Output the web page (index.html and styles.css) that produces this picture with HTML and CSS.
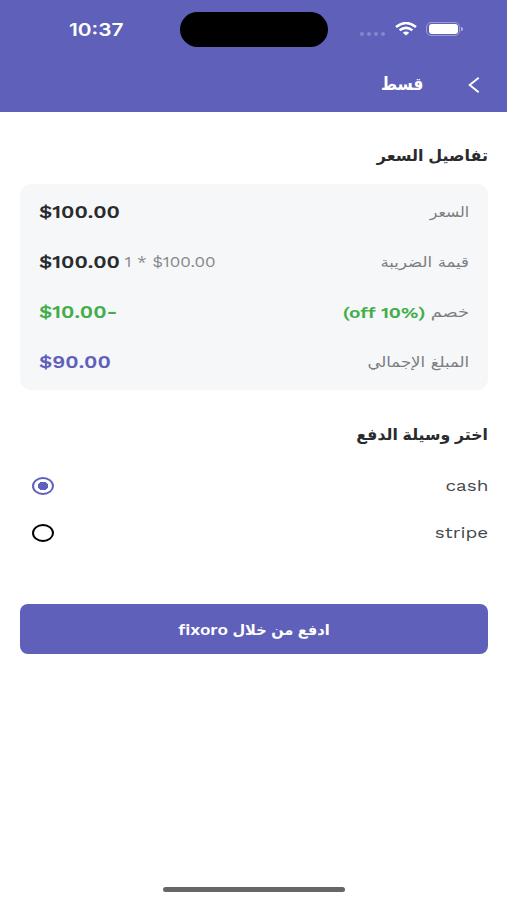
FILE: index.html
```html
<!DOCTYPE html>
<html lang="ar" dir="rtl">
<head>
<meta charset="utf-8">
<title>قسط</title>
<link rel="stylesheet" href="styles.css">
</head>
<body>
<header class="top">
  <div class="status" dir="ltr">
    <span class="clock"><b>10:37</b></span>
    <span class="island"></span>
    <span class="signals">
      <i class="dots"><i></i><i></i><i></i><i></i></i>
      <svg class="wifi" viewBox="0 0 22 14"><path d="M1 5Q11-3 21 5M4.600 8.300Q11 3.400 17.400 8.300" fill="none" stroke="#fff" stroke-width="2.500"/><path d="M7.800 10.700Q11 8.200 14.200 10.700L11 13.600Z" fill="#fff"/></svg>
      <span class="battery"></span>
    </span>
  </div>
  <div class="bar">
    <svg class="back" viewBox="0 0 12 16"><path d="M10.700 .8 1.700 8l9 7.200" fill="none" stroke="#fff" stroke-width="1.900"/></svg>
    <h1>قسط</h1>
  </div>
</header>
<main>
  <h2>تفاصيل السعر</h2>
  <section class="card">
    <div class="row"><span class="label short">السعر</span><b class="amount" dir="ltr">$100.00</b></div>
    <div class="row"><span class="label">قيمة الضريبة</span><span class="sum" dir="ltr"><b class="amount">$100.00</b><span class="calc">1 * $100.00</span></span></div>
    <div class="row"><span class="label discount"><span class="word">خصم</span><b class="off" dir="ltr">(off 10%)</b></span><b class="amount green" dir="ltr">$10.00-</b></div>
    <div class="row"><span class="label">المبلغ الإجمالي</span><b class="amount blue" dir="ltr">$90.00</b></div>
  </section>
  <h2 class="pay">اختر وسيلة الدفع</h2>
  <div class="options">
    <div class="option"><span>cash</span><i class="radio on"></i></div>
    <div class="option"><span>stripe</span><i class="radio"></i></div>
  </div>
  <button><span class="action">ادفع من خلال <b>fixoro</b></span></button>
</main>
<div class="home"></div>
</body>
</html>
```
FILE: styles.css
```css
*{box-sizing:border-box}
body{margin:0;height:900px;background:#fff;color:#292b2e;font-family:"Work Sans","DejaVu Sans",sans-serif;display:flex;flex-direction:column;overflow:hidden}
.top{height:112px;background:#5f60b9;color:#fff}
.status{height:59px;display:flex;padding:12px 44px 0 69px}
.clock{width:111px;font-family:Inter,sans-serif;font-size:17.5px;line-height:35px}
.clock b{display:inline-block;font-weight:600;transform:scaleX(1.19);transform-origin:left}
.island{width:148px;height:35px;border-radius:18px;background:#000}
.signals{display:flex;align-items:center;height:34px;margin-left:32px}
.dots{display:flex;gap:3px;margin-top:9px}
.dots i{width:4px;height:4px;border-radius:50%;background:#8586cb}
.wifi{width:22px;height:14px;margin:0 0 1px 10px}
.battery{width:34px;height:14px;border:1px solid #9c9dd5;border-radius:5px;padding:1px;margin-left:9px;position:relative}
.battery::before{content:"";display:block;width:29px;height:10px;margin-left:1px;border-radius:3px;background:#fff}
.battery::after{content:"";position:absolute;right:-4px;top:4px;width:2px;height:4px;border-radius:0 2px 2px 0;background:#b5b6df}
.bar{height:52px;display:flex;align-items:center;padding-right:27px}
.back{width:12px;height:16px}
h1{margin:0 45px 2px 0;font-size:18px;line-height:24px;transform:scaleX(.86);transform-origin:right}
main{padding:32px 19px 0 20px;display:flex;flex-direction:column}
h2{margin:0;font-size:15.5px;line-height:25px;height:25px;font-weight:600;transform:scaleX(1.03);transform-origin:right}
.card{margin-top:15px;height:206px;border-radius:11px;background:#f5f7f9;padding:3px 19px}
.row{height:50px;display:flex;justify-content:space-between;align-items:center}
.label,.option span{transform:scaleX(1.18);transform-origin:right}
.label{font-size:14px;color:#7b7d81}
.short{transform:scaleX(1.12)}
.discount{display:flex;align-items:center;gap:7px}
.word{transform:scaleX(1.08);transform-origin:right}
.amount{font-size:18px;font-weight:600;line-height:22px;transform:scaleX(1.17);transform-origin:left}
.sum{display:flex;align-items:center;transform:scaleX(1.17);transform-origin:left}
.sum .amount{transform:none}
.calc{font-size:14.5px;line-height:18px;color:#85878a;margin:2px 0 0 4px}
.off,.green{color:#44ad4b;font-weight:600}
.off{font-size:16.2px}
.blue{color:#5f60b9}
.pay{margin-top:33px;transform:scaleX(1.015)}
.options{margin-top:15px}
.option{height:46.5px;display:flex;align-items:center;justify-content:space-between;font-size:16px;color:#45474a;padding-left:12px}
.option span{padding-bottom:1px}
.radio{width:22px;height:18px;border:2px solid #000;border-radius:50%}
.on{border-color:#5f60b9;background:radial-gradient(ellipse 5.5px 4.5px at center,#5f60b9 92%,#fff 100%)}
button{height:50px;border:0;border-radius:8px;background:#5f60b9;color:#fff;font:600 14.3px "Work Sans","DejaVu Sans",sans-serif;margin-top:48px;padding:0}
.action{display:inline-block;transform:scaleX(1.02)}
.action b{display:inline-block;font-size:16px;font-weight:600;margin-left:3px;transform:scaleX(1.07);transform-origin:right}
.home{width:182px;height:5px;border-radius:3px;background:#666;margin:auto auto 8px}
```
